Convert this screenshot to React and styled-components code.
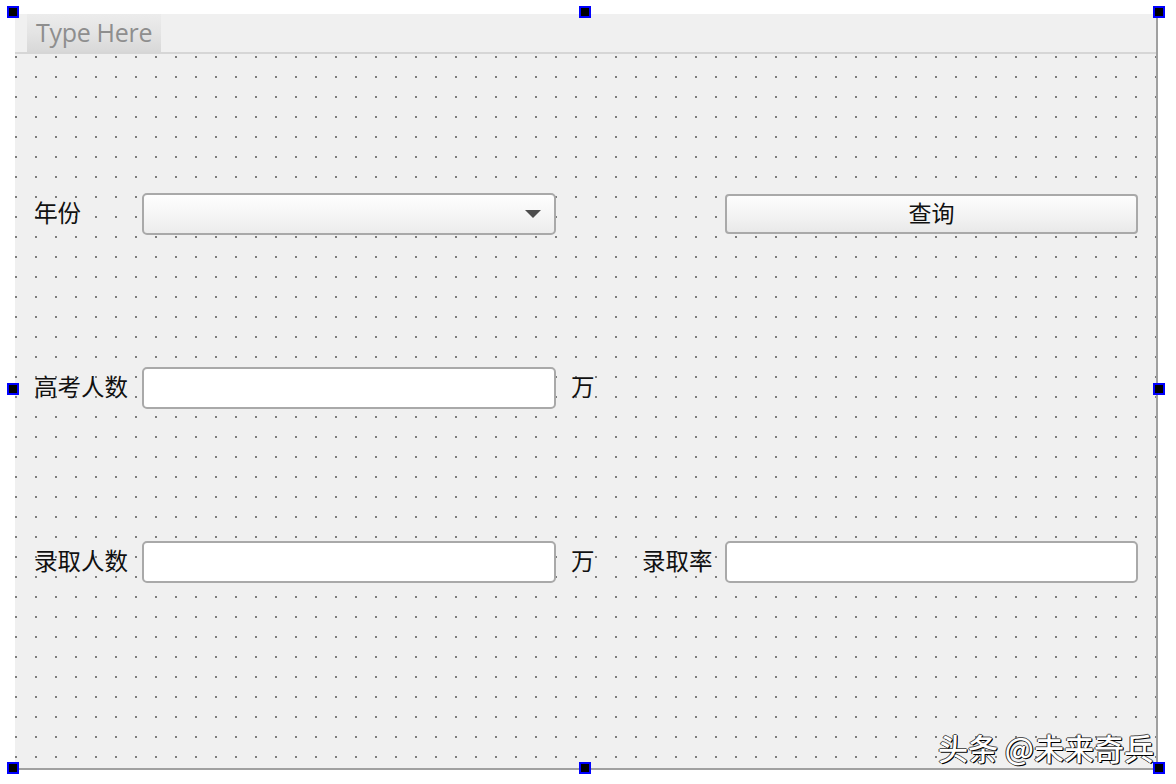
import React from 'react';
import styled, { createGlobalStyle } from 'styled-components';

const GlobalStyle = createGlobalStyle`
    html, body { margin: 0; padding: 0; background: #ffffff; }
    body { width: 1176px; height: 784px; overflow: hidden; }
`;

const Canvas = styled.div`
    position: relative;
    width: 1176px;
    height: 784px;
    padding: 14px 18px 16px 15px;
    box-sizing: border-box;
`;

const FormBox = styled.div`
    position: relative;
    height: 100%;
    background: #f0f0f0;
    border-right: 2px solid #a0a0a0;
    border-bottom: 2px solid #a0a0a0;
    display: flex;
    flex-direction: column;
`;

const MenuBar = styled.div`
    height: 38px;
    border-bottom: 2px solid #d6d6d6;
    display: flex;
    align-items: stretch;
    padding-left: 12px;
`;

const MenuItem = styled.div`
    display: flex;
    align-items: center;
    padding: 0 9px 2px;
    width: 134px;
    box-sizing: border-box;
    background: linear-gradient(to bottom, #ececec 0%, #e4e4e4 50%, #d8d8d8 100%);
    color: #8e8e8e;
    font-family: "Open Sans", "Liberation Sans", sans-serif;
    font-size: 25px;
    letter-spacing: -0.3px;
    white-space: nowrap;
`;

const Grid = styled.div`
    flex: 1;
    background-color: #f0f0f0;
    background-image: radial-gradient(circle at 1px 1px, #7e7e7e 0.75px, transparent 1px);
    background-size: 20px 20px;
    background-position: 0 2px;
    padding: 139px 0 0 19px;
    display: grid;
    grid-template-columns: 108px 414px 86px 83px 413px;
    grid-template-rows: 42px 42px 42px;
    row-gap: 132px;
    align-items: center;
`;

const Label = styled.span`
    font-family: "Noto Sans CJK SC", "Liberation Sans", sans-serif;
    font-size: 23.5px;
    line-height: 1;
    color: #111;
    margin-top: -3px;
    padding-left: ${(p) => p.$indent || 0}px;
`;

const Field = styled.div`
    height: 42px;
    box-sizing: border-box;
    border: 2px solid #a9a9a9;
    border-radius: 5px;
    background: #ffffff;
`;

const Combo = styled(Field)`
    display: flex;
    align-items: center;
    justify-content: flex-end;
    padding-right: 13px;
    background: linear-gradient(to bottom, #fefefe 0%, #f4f4f4 60%, #ececec 100%);
`;

const Arrow = styled.span`
    width: 0;
    height: 0;
    border-left: 8px solid transparent;
    border-right: 8px solid transparent;
    border-top: 8px solid #4d4d4d;
`;

const Button = styled.div`
    height: 40px;
    box-sizing: border-box;
    border: 2px solid #a9a9a9;
    border-radius: 4px;
    background: linear-gradient(to bottom, #fdfdfd 0%, #f3f3f3 55%, #e9e9e9 100%);
    display: flex;
    align-items: center;
    justify-content: center;
    padding-bottom: 3px;
    font-family: "Noto Sans CJK SC", "Liberation Sans", sans-serif;
    font-size: 23px;
    line-height: 1;
    color: #111;
`;

const Watermark = styled.div`
    position: absolute;
    right: 22px;
    bottom: 22px;
    font-family: "Noto Sans CJK SC", sans-serif;
    font-size: 30px;
    font-weight: 500;
    line-height: 1;
    color: #ffffff;
    text-shadow: 1px 1px 0 #000, -1px 0 0 #333, 0 -1px 0 #555, 1px 0 0 #222;
`;

const Handle = styled.span`
    position: absolute;
    width: 8px;
    height: 8px;
    background: #000;
    border: 2px solid #0000ff;
    left: ${(p) => p.$x - 6}px;
    top: ${(p) => p.$y - 6}px;
`;

const handles = [
    [13, 12], [585, 12], [1159, 12],
    [13, 389], [1159, 389],
    [13, 768], [585, 768], [1159, 768],
];

export default function App() {
    return (
        <>
            <GlobalStyle />
            <Canvas>
                <FormBox>
                    <MenuBar>
                        <MenuItem>Type Here</MenuItem>
                    </MenuBar>
                    <Grid>
                        <Label>年份</Label>
                        <Combo><Arrow /></Combo>
                        <span />
                        <span />
                        <Button>查询</Button>

                        <Label>高考人数</Label>
                        <Field />
                        <Label $indent={15}>万</Label>
                        <span />
                        <span />

                        <Label>录取人数</Label>
                        <Field />
                        <Label $indent={15}>万</Label>
                        <Label>录取率</Label>
                        <Field />
                    </Grid>
                </FormBox>
                <Watermark>头条 @未来奇兵</Watermark>
                {handles.map(([x, y]) => (
                    <Handle key={`${x}-${y}`} $x={x} $y={y} />
                ))}
            </Canvas>
        </>
    );
}
